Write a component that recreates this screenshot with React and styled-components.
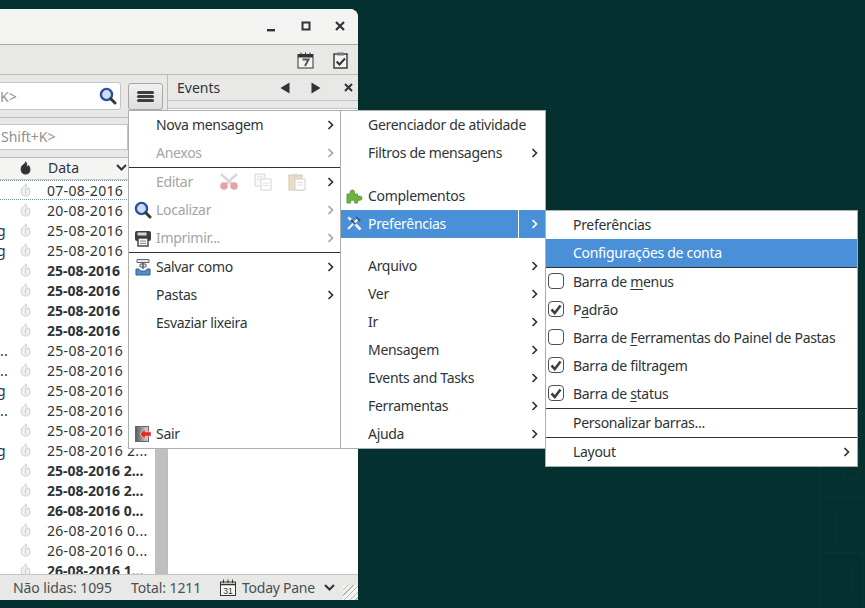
import React from "react";
import styled, { createGlobalStyle } from "styled-components";

const FONT = `"Noto Sans", "Open Sans", sans-serif`;

const rows = [
  { frag: "", date: "07-08-2016", focus: true },
  { frag: "", date: "20-08-2016" },
  { frag: "g", date: "25-08-2016" },
  { frag: "g", date: "25-08-2016" },
  { frag: "", date: "25-08-2016", bold: true },
  { frag: "", date: "25-08-2016", bold: true },
  { frag: "", date: "25-08-2016", bold: true },
  { frag: "", date: "25-08-2016", bold: true },
  { frag: "..", date: "25-08-2016" },
  { frag: "..", date: "25-08-2016" },
  { frag: "g", date: "25-08-2016" },
  { frag: "..", date: "25-08-2016" },
  { frag: "", date: "25-08-2016" },
  { frag: "g", date: "25-08-2016 2..." },
  { frag: "", date: "25-08-2016 2...", bold: true },
  { frag: "", date: "25-08-2016 2...", bold: true },
  { frag: "", date: "26-08-2016 0...", bold: true },
  { frag: "", date: "26-08-2016 0..." },
  { frag: "", date: "26-08-2016 0..." },
  { frag: "", date: "26-08-2016 1...", bold: true },
];

const Chevron = ({ color = "#2e3436" }) => (
  <svg width="7" height="10" viewBox="0 0 7 10">
    <path d="M1.5 1 L5.5 5 L1.5 9" fill="none" stroke={color} strokeWidth="1.7" />
  </svg>
);

const ChevronDown = () => (
  <svg width="11" height="7" viewBox="0 0 11 7">
    <path d="M1 1 L5.5 5.5 L10 1" fill="none" stroke="#2e3436" strokeWidth="2" />
  </svg>
);

const Flame = ({ dark }) => (
  <svg width="11" height="14" viewBox="0 0 11 14">
    <path
      d="M5.5 .8 C6 3 3.6 3 2.2 4.8 C.6 6.8 .8 10.4 2.4 12 C4 13.4 7.2 13.4 8.8 12 C10.4 10.4 10.4 6.8 8.6 4.6 C8.2 5.6 7.6 6 6.8 6 C7 4 6.6 2.2 5.5 .8 Z"
      fill={dark ? "#2e3436" : "#efefee"}
      stroke={dark ? "#2e3436" : "#cfcfcd"}
      strokeWidth="1"
    />
    {!dark && <path d="M5.5 6 V11" stroke="#cfcfcd" strokeWidth="1" />}
  </svg>
);

const SearchIcon = ({ size = 18 }) => (
  <svg width={size} height={size} viewBox="0 0 18 18">
    <circle cx="7.5" cy="7.5" r="5.6" fill="#cfdcf2" stroke="#2f4fa0" strokeWidth="2.4" />
    <path d="M11.8 11.8 L16 16" stroke="#33383a" strokeWidth="3" strokeLinecap="round" />
  </svg>
);

const PrintIcon = () => (
  <svg width="18" height="18" viewBox="0 0 18 18">
    <rect x="1" y="2" width="16" height="10" rx="2" fill="#3a3f41" />
    <rect x="3.5" y="3.5" width="9" height="3" fill="#d8d8d8" />
    <rect x="4" y="9" width="10" height="8" fill="#f4f4f4" stroke="#3a3f41" strokeWidth="1.4" />
    <path d="M6 12 H12 M6 14.4 H12" stroke="#8a8a8a" strokeWidth="1" />
  </svg>
);

const SaveIcon = () => (
  <svg width="18" height="18" viewBox="0 0 18 18">
    <path d="M3 1.5 H15 V4.5 H3 Z M6 6 H12 V9 H6 Z" fill="#e8e8e8" stroke="#667" strokeWidth="1" />
    <path d="M9 4.5 V11" stroke="#556" strokeWidth="1.4" />
    <path d="M2 11 L5 11 L6 13 H12 L13 11 H16 V17 H2 Z" fill="#4f8fd0" stroke="#2d5f98" strokeWidth="1" />
  </svg>
);

const ExitIcon = () => (
  <svg width="18" height="18" viewBox="0 0 18 18">
    <defs>
      <linearGradient id="doorShade" x1="0" x2="1" y1="0" y2="0">
        <stop offset="0" stopColor="#5a5a5a" />
        <stop offset="1" stopColor="#d6d6d6" />
      </linearGradient>
    </defs>
    <rect x="1.5" y="1.5" width="13" height="15" fill="url(#doorShade)" stroke="#666" strokeWidth="1" />
    <path d="M6 9 L11 3.8 V6.8 H17 V11.2 H11 V14.2 Z" fill="#de2c25" stroke="#fff" strokeWidth=".5" />
  </svg>
);

const PuzzleIcon = () => (
  <svg width="17" height="17" viewBox="0 0 17 17">
    <path
      d="M1 7 H4.5 C3.6 5 4.4 3 6.4 3 C8.4 3 9 5 8 7 H11.5 V9.6 C13.6 8.6 16 9.2 16 11.2 C16 13.2 13.6 13.8 11.5 13 V16 H8.6 C9.2 14.6 8.4 13.2 6.6 13.2 C4.8 13.2 4 14.6 4.6 16 H1 Z"
      fill="#6eb43f"
      stroke="#4c8c2a"
      strokeWidth=".8"
    />
  </svg>
);

const ToolsIcon = () => (
  <svg width="16" height="16" viewBox="0 0 16 16">
    <path d="M2 14 L12 4" stroke="#eef1f5" strokeWidth="2.2" />
    <path d="M10.5 1.5 L14.8 5.4 L13.4 6.4 L10 3 Z" fill="#39444f" />
    <path d="M9 9 L4.5 4.5" stroke="#39444f" strokeWidth="1.6" />
    <path d="M1.5 3 L3 1.5 L6 4 L4 6 Z" fill="#eef1f5" />
    <path d="M9.5 9.5 L14.5 14.5" stroke="#f4f4f4" strokeWidth="2.6" />
  </svg>
);

const Scissors = () => (
  <svg width="22" height="18" viewBox="0 0 22 18" opacity=".45">
    <path d="M3 1 L14 11 M19 1 L8 11" stroke="#a9a9a9" strokeWidth="2.4" />
    <circle cx="6" cy="13" r="3.8" fill="#d2303a" />
    <circle cx="16" cy="13" r="3.8" fill="#d2303a" />
  </svg>
);

const CopyIcon = () => (
  <svg width="18" height="18" viewBox="0 0 18 18" opacity=".4">
    <rect x="1" y="1" width="10" height="12" fill="#f4f4f4" stroke="#9a9a9a" />
    <rect x="7" y="6" width="10" height="11" fill="#fff" stroke="#9a9a9a" />
    <path d="M3 4 H9 M3 6.5 H6 M9 10 H15 M9 12.5 H15" stroke="#b5b5b5" />
  </svg>
);

const PasteIcon = () => (
  <svg width="18" height="18" viewBox="0 0 18 18" opacity=".45">
    <rect x="1" y="2" width="13" height="15" fill="#d9b27c" stroke="#a98450" />
    <rect x="5" y=".8" width="5" height="3" fill="#aaa" />
    <rect x="7" y="6" width="10" height="11" fill="#fff" stroke="#9a9a9a" />
    <path d="M9 9.5 H15 M9 12 H15" stroke="#b5b5b5" />
  </svg>
);

const CalendarSeven = () => (
  <svg width="17" height="17" viewBox="0 0 17 17">
    <rect x="1" y="2.5" width="15" height="13.5" fill="#f4f4f2" stroke="#333" strokeWidth="1" />
    <rect x="1" y="2.5" width="15" height="3" fill="#333" />
    <path d="M4 .5 V3 M8.5 .5 V3 M13 .5 V3" stroke="#333" />
    <path d="M5.5 7.5 H11.5 L8 14" fill="none" stroke="#555" strokeWidth="2" />
  </svg>
);

const TaskIcon = () => (
  <svg width="15" height="17" viewBox="0 0 15 17">
    <rect x="1" y="2" width="13" height="14" fill="#f4f4f2" stroke="#333" strokeWidth="1.4" />
    <rect x="4" y=".5" width="7" height="3" fill="#777" />
    <path d="M3.6 9.5 L6.5 12.5 L12 6.5" fill="none" stroke="#333" strokeWidth="2" />
  </svg>
);

const CalendarDay = () => (
  <svg width="16" height="17" viewBox="0 0 16 17">
    <rect x=".5" y="3" width="15" height="13.5" fill="#f6f6f4" stroke="#333" />
    <path d="M1 5.5 H15" stroke="#333" strokeWidth="1.5" />
    <path d="M3.5 .5 V4 M8 .5 V4 M12.5 .5 V4" stroke="#333" />
    <text x="8" y="14.5" fontSize="8.5" fontFamily="Liberation Sans" fill="#333" textAnchor="middle">31</text>
  </svg>
);

const Check = () => (
  <svg width="12" height="11" viewBox="0 0 12 11">
    <path d="M1.5 5.5 L4.8 9 L10.5 1.5" fill="none" stroke="#3c4144" strokeWidth="2.6" />
  </svg>
);

const CtlIcon = ({ type }) => (
  <svg width="13" height="13" viewBox="0 0 13 13">
    {type === "min" && <rect x="1" y="9" width="8" height="2.4" fill="#2e3436" />}
    {type === "max" && <rect x="2.5" y="2.5" width="7" height="7" fill="none" stroke="#2e3436" strokeWidth="2" />}
    {type === "close" && <path d="M2 2 L10 10 M10 2 L2 10" stroke="#2e3436" strokeWidth="2.2" />}
  </svg>
);

const Tri = ({ dir }) => (
  <svg width="10" height="12" viewBox="0 0 10 12">
    <path d={dir === "left" ? "M9.5 .5 V11.5 L.5 6 Z" : "M.5 .5 V11.5 L9.5 6 Z"} fill="#2e3436" />
  </svg>
);

const Wallpaper = () => (
  <WallpaperArt width="50" height="170" viewBox="0 0 50 170">
    <path
      d="M5 0 V60 H48 M5 60 V115 H48 V170 M5 115 V170 M28 12 H44 V40 H28 Z M22 70 V108 M38 125 V160"
      fill="none"
      stroke="#0a3937"
      strokeWidth="1"
    />
  </WallpaperArt>
);

const App = () => (
  <>
    <GlobalStyle />
    <Desktop>
      <Wallpaper />
      <Window>
        <TitleBar>
          <CtlBtn><CtlIcon type="min" /></CtlBtn>
          <CtlBtn><CtlIcon type="max" /></CtlBtn>
          <CtlBtn><CtlIcon type="close" /></CtlBtn>
        </TitleBar>
        <Toolbar>
          <CalendarSeven />
          <TaskIcon />
        </Toolbar>
        <Main>
          <LeftPane>
            <SearchRow>
              <SearchInput>
                <span>K&gt;</span>
                <SearchIcon />
              </SearchInput>
              <MenuButton>
                <Burger><i /><i /><i /></Burger>
              </MenuButton>
            </SearchRow>
            <FilterRow>
              <FilterInput>Shift+K&gt;</FilterInput>
            </FilterRow>
            <ListArea>
              <ListColumn>
                <ListHeader>
                  <Frag />
                  <FlameCell><Flame dark /></FlameCell>
                  <DateHead>Data</DateHead>
                  <ChevronDown />
                </ListHeader>
                {rows.map((row, i) => (
                  <Row key={i} $focus={row.focus} $bold={row.bold}>
                    <Frag $cut={row.frag === "g"}>{row.frag}</Frag>
                    <FlameCell><Flame /></FlameCell>
                    <span>{row.date}</span>
                  </Row>
                ))}
              </ListColumn>
              <ScrollBar />
            </ListArea>
          </LeftPane>
          <EventsPane>
            <EventsHead>
              <EventsTitle>Events</EventsTitle>
              <EventsNav>
                <Tri dir="left" />
                <Tri dir="right" />
              </EventsNav>
              <EventsClose>
                <svg width="9" height="9" viewBox="0 0 9 9">
                  <path d="M1 1 L8 8 M8 1 L1 8" stroke="#2e3436" strokeWidth="2" />
                </svg>
              </EventsClose>
            </EventsHead>
            <EventsSub />
            <EventsBody />
          </EventsPane>
        </Main>
        <StatusBar>
          <StatusText $w={118}>Não lidas: 1095</StatusText>
          <StatusText $w={89}>Total: 1211</StatusText>
          <CalendarDay />
          <TodayLabel>Today Pane</TodayLabel>
          <ChevronDown />
          <Grip />
        </StatusBar>
      </Window>

      <MainMenu>
        <Item><Label>Nova mensagem</Label><Chevron /></Item>
        <Item $disabled><Label>Anexos</Label><Chevron color="#a3a5a6" /></Item>
        <Sep />
        <Item $disabled>
          <Label>Editar</Label>
          <EditIcons><Scissors /><CopyIcon /><PasteIcon /></EditIcons>
          <Chevron />
        </Item>
        <Item $disabled><IconSlot><SearchIcon /></IconSlot><Label>Localizar</Label><Chevron color="#a3a5a6" /></Item>
        <Item $disabled><IconSlot><PrintIcon /></IconSlot><Label>Imprimir...</Label><Chevron color="#a3a5a6" /></Item>
        <Sep />
        <Item><IconSlot><SaveIcon /></IconSlot><Label>Salvar como</Label><Chevron /></Item>
        <Item><Label>Pastas</Label><Chevron /></Item>
        <Item><Label>Esvaziar lixeira</Label></Item>
        <Grow />
        <Item><IconSlot><ExitIcon /></IconSlot><Label>Sair</Label></Item>
      </MainMenu>

      <AppMenu>
        <Item><Label>Gerenciador de atividade</Label></Item>
        <Item><Label>Filtros de mensagens</Label><Chevron /></Item>
        <Gap $h={15} />
        <Item><IconSlot><PuzzleIcon /></IconSlot><Label>Complementos</Label></Item>
        <Item $active>
          <IconSlot><ToolsIcon /></IconSlot>
          <Label>Preferências</Label>
          <Split />
          <Chevron color="#fff" />
        </Item>
        <Gap $h={14} />
        {["Arquivo", "Ver", "Ir", "Mensagem", "Events and Tasks", "Ferramentas", "Ajuda"].map((t) => (
          <Item key={t}><Label>{t}</Label><Chevron /></Item>
        ))}
      </AppMenu>

      <PrefsMenu>
        <Item><Label>Preferências</Label></Item>
        <Item $active><Label>Configurações de conta</Label></Item>
        <Sep />
        <Item><IconSlot><Box /></IconSlot><Label>Barra de <u>m</u>enus</Label></Item>
        <Item><IconSlot><Box><Check /></Box></IconSlot><Label>P<u>a</u>drão</Label></Item>
        <Item><IconSlot><Box /></IconSlot><Label>Barra de <u>F</u>erramentas do Painel de Pastas</Label></Item>
        <Item><IconSlot><Box><Check /></Box></IconSlot><Label>Barra de filtragem</Label></Item>
        <Item><IconSlot><Box><Check /></Box></IconSlot><Label>Barra de <u>s</u>tatus</Label></Item>
        <Sep />
        <Item><Label>Personalizar barras...</Label></Item>
        <Sep />
        <Item><Label>Layout</Label><Chevron /></Item>
      </PrefsMenu>
    </Desktop>
  </>
);

export default App;

const GlobalStyle = createGlobalStyle`
  html, body {
    margin: 0;
    padding: 0;
    background: #04312f;
    overflow: hidden;
  }
  * {
    box-sizing: border-box;
  }
`;

const Desktop = styled.div`
  position: relative;
  width: 865px;
  height: 608px;
  padding-top: 9px;
  background: #04312f;
  font-family: ${FONT};
  font-size: 14px;
  color: #2e3436;
`;

const WallpaperArt = styled.svg`
  position: absolute;
  right: 0;
  bottom: 0;
`;

const Window = styled.div`
  position: relative;
  width: 358px;
  height: 591px;
  display: flex;
  flex-direction: column;
  overflow: hidden;
  border-top-right-radius: 8px;
  background: #e8e8e7;
`;

const TitleBar = styled.div`
  height: 36px;
  display: flex;
  justify-content: flex-end;
  align-items: center;
  background: #f3f3f2;
  border-bottom: 1px solid #a9a9a7;
  padding-right: 11px;
`;

const CtlBtn = styled.div`
  width: 34px;
  display: flex;
  justify-content: flex-end;
`;

const Toolbar = styled.div`
  height: 30px;
  display: flex;
  justify-content: flex-end;
  align-items: center;
  gap: 19px;
  padding: 2px 10px 0 0;
  background: #e8e8e7;
  border-bottom: 1px solid #bcbcba;
`;

const Main = styled.div`
  flex: 1;
  min-height: 0;
  display: flex;
`;

const LeftPane = styled.div`
  width: 167px;
  display: flex;
  flex-direction: column;
`;

const SearchRow = styled.div`
  height: 43px;
  display: flex;
  align-items: flex-start;
  padding-top: 7px;
  border-bottom: 1px solid #bcbcba;
`;

const SearchInput = styled.div`
  width: 121px;
  height: 28px;
  display: flex;
  align-items: center;
  justify-content: space-between;
  padding-right: 3px;
  background: #fff;
  border: 1px solid #c4c4c2;
  border-left: none;
  border-radius: 0 3px 3px 0;
  color: #8f9192;
`;

const MenuButton = styled.div`
  width: 35px;
  height: 27px;
  margin-left: 7px;
  margin-top: 1px;
  display: flex;
  align-items: center;
  justify-content: center;
  background: linear-gradient(#f1f1f0, #dededc);
  border: 1px solid #a7a7a5;
  border-radius: 3px;
`;

const Burger = styled.div`
  width: 17px;
  display: flex;
  flex-direction: column;
  gap: 1px;

  i {
    display: block;
    height: 3px;
    background: #3a3f41;
    border-radius: 1.5px;
  }
`;

const FilterRow = styled.div`
  height: 40px;
  padding-top: 6px;
  border-bottom: 1px solid #bcbcba;
`;

const FilterInput = styled.div`
  width: 128px;
  height: 26px;
  padding-left: 1px;
  line-height: 24px;
  background: #fff;
  border: 1px solid #c4c4c2;
  border-left: none;
  color: #8f9192;
`;

const ListArea = styled.div`
  flex: 1;
  min-height: 0;
  display: flex;
  background: #fff;
`;

const ListColumn = styled.div`
  width: 155px;
  overflow: hidden;
`;

const ListHeader = styled.div`
  height: 22px;
  display: flex;
  align-items: center;
  padding-bottom: 2px;
  background: #f4f4f3;
  border-bottom: 1px solid #c9c9c7;
`;

const Row = styled.div`
  height: 20px;
  display: flex;
  align-items: center;
  white-space: nowrap;
  font-weight: ${(props) => (props.$bold ? 700 : 400)};
  letter-spacing: ${(props) => (props.$bold ? "0" : "0.3px")};
  border-top: ${(props) => (props.$focus ? "1px dotted #6d8fb5" : "none")};
  border-bottom: ${(props) => (props.$focus ? "1px dotted #6d8fb5" : "none")};
`;

const Frag = styled.span`
  width: 20px;
  flex: none;
  text-indent: ${(props) => (props.$cut ? "-3px" : "0")};
  font-weight: 400;
`;

const FlameCell = styled.span`
  width: 27px;
  flex: none;
  display: flex;
  justify-content: flex-start;
`;

const DateHead = styled.span`
  flex: 0 0 68px;
  margin-left: 1px;
`;

const ScrollBar = styled.div`
  width: 12px;
  background: #bfbfbf;
`;

const EventsPane = styled.div`
  flex: 1;
  display: flex;
  flex-direction: column;
  border-left: 1px solid #bcbcba;
`;

const EventsHead = styled.div`
  height: 26px;
  display: flex;
  align-items: center;
  padding-left: 9px;
  border-bottom: 1px solid #c4c4c2;
`;

const EventsTitle = styled.span`
  width: 103px;
`;

const EventsNav = styled.div`
  display: flex;
  gap: 21px;
`;

const EventsClose = styled.div`
  margin-left: 23px;
  display: flex;
`;

const EventsSub = styled.div`
  height: 8px;
  border-bottom: 1px solid #c4c4c2;
`;

const EventsBody = styled.div`
  flex: 1;
  background: #fff;
`;

const StatusBar = styled.div`
  position: relative;
  height: 26px;
  display: flex;
  align-items: center;
  padding-left: 13px;
  background: #e8e8e7;
  border-top: 1px solid #c4c4c2;
  color: #4a4f51;
`;

const StatusText = styled.span`
  width: ${(props) => props.$w}px;
  letter-spacing: -0.1px;
`;

const TodayLabel = styled.span`
  margin: 0 9px 0 6px;
  letter-spacing: -0.25px;
`;

const Grip = styled.div`
  position: absolute;
  right: 0;
  bottom: 0;
  width: 15px;
  height: 15px;
  background: repeating-linear-gradient(135deg, #f4f4f3 0 3px, #b8b8b6 3px 4px);
`;

const Menu = styled.div`
  position: absolute;
  display: flex;
  flex-direction: column;
  background: #fff;
  border: 1px solid #a9b0b0;
`;

const MainMenu = styled(Menu)`
  left: 128px;
  top: 110px;
  width: 214px;
  height: 339px;
`;

const AppMenu = styled(Menu)`
  left: 340px;
  top: 110px;
  width: 206px;
  height: 339px;
`;

const PrefsMenu = styled(Menu)`
  left: 545px;
  top: 210px;
  width: 313px;
  height: 257px;
`;

const Item = styled.div`
  position: relative;
  height: 28px;
  flex: none;
  display: flex;
  align-items: center;
  padding: 0 7px 0 27px;
  background: ${(props) => (props.$active ? "#4a90d9" : "transparent")};
  color: ${(props) => (props.$active ? "#fff" : props.$disabled ? "#a3a5a6" : "#2e3436")};

  u {
    text-underline-offset: 2px;
  }
`;

const Label = styled.span`
  flex: 1;
  padding-bottom: 2px;
  white-space: nowrap;
  letter-spacing: -0.3px;
`;

const IconSlot = styled.span`
  position: absolute;
  left: 5px;
  top: 5px;
  display: flex;
`;

const Box = styled.span`
  width: 16px;
  height: 16px;
  margin-left: -3px;
  display: flex;
  align-items: center;
  justify-content: center;
  background: #fff;
  border: 1px solid #4b5052;
  border-radius: 4px;
`;

const EditIcons = styled.span`
  display: flex;
  align-items: center;
  gap: 16px;
  margin-right: 21px;

  svg:first-child {
    margin-right: -2px;
  }
`;

const Split = styled.span`
  position: absolute;
  right: 26px;
  top: 0;
  bottom: 0;
  width: 1px;
  background: #fff;
`;

const Sep = styled.div`
  height: 1px;
  flex: none;
  background: #2e3436;
`;

const Gap = styled.div`
  flex: none;
  height: ${(props) => props.$h}px;
`;

const Grow = styled.div`
  flex: 1;
`;
